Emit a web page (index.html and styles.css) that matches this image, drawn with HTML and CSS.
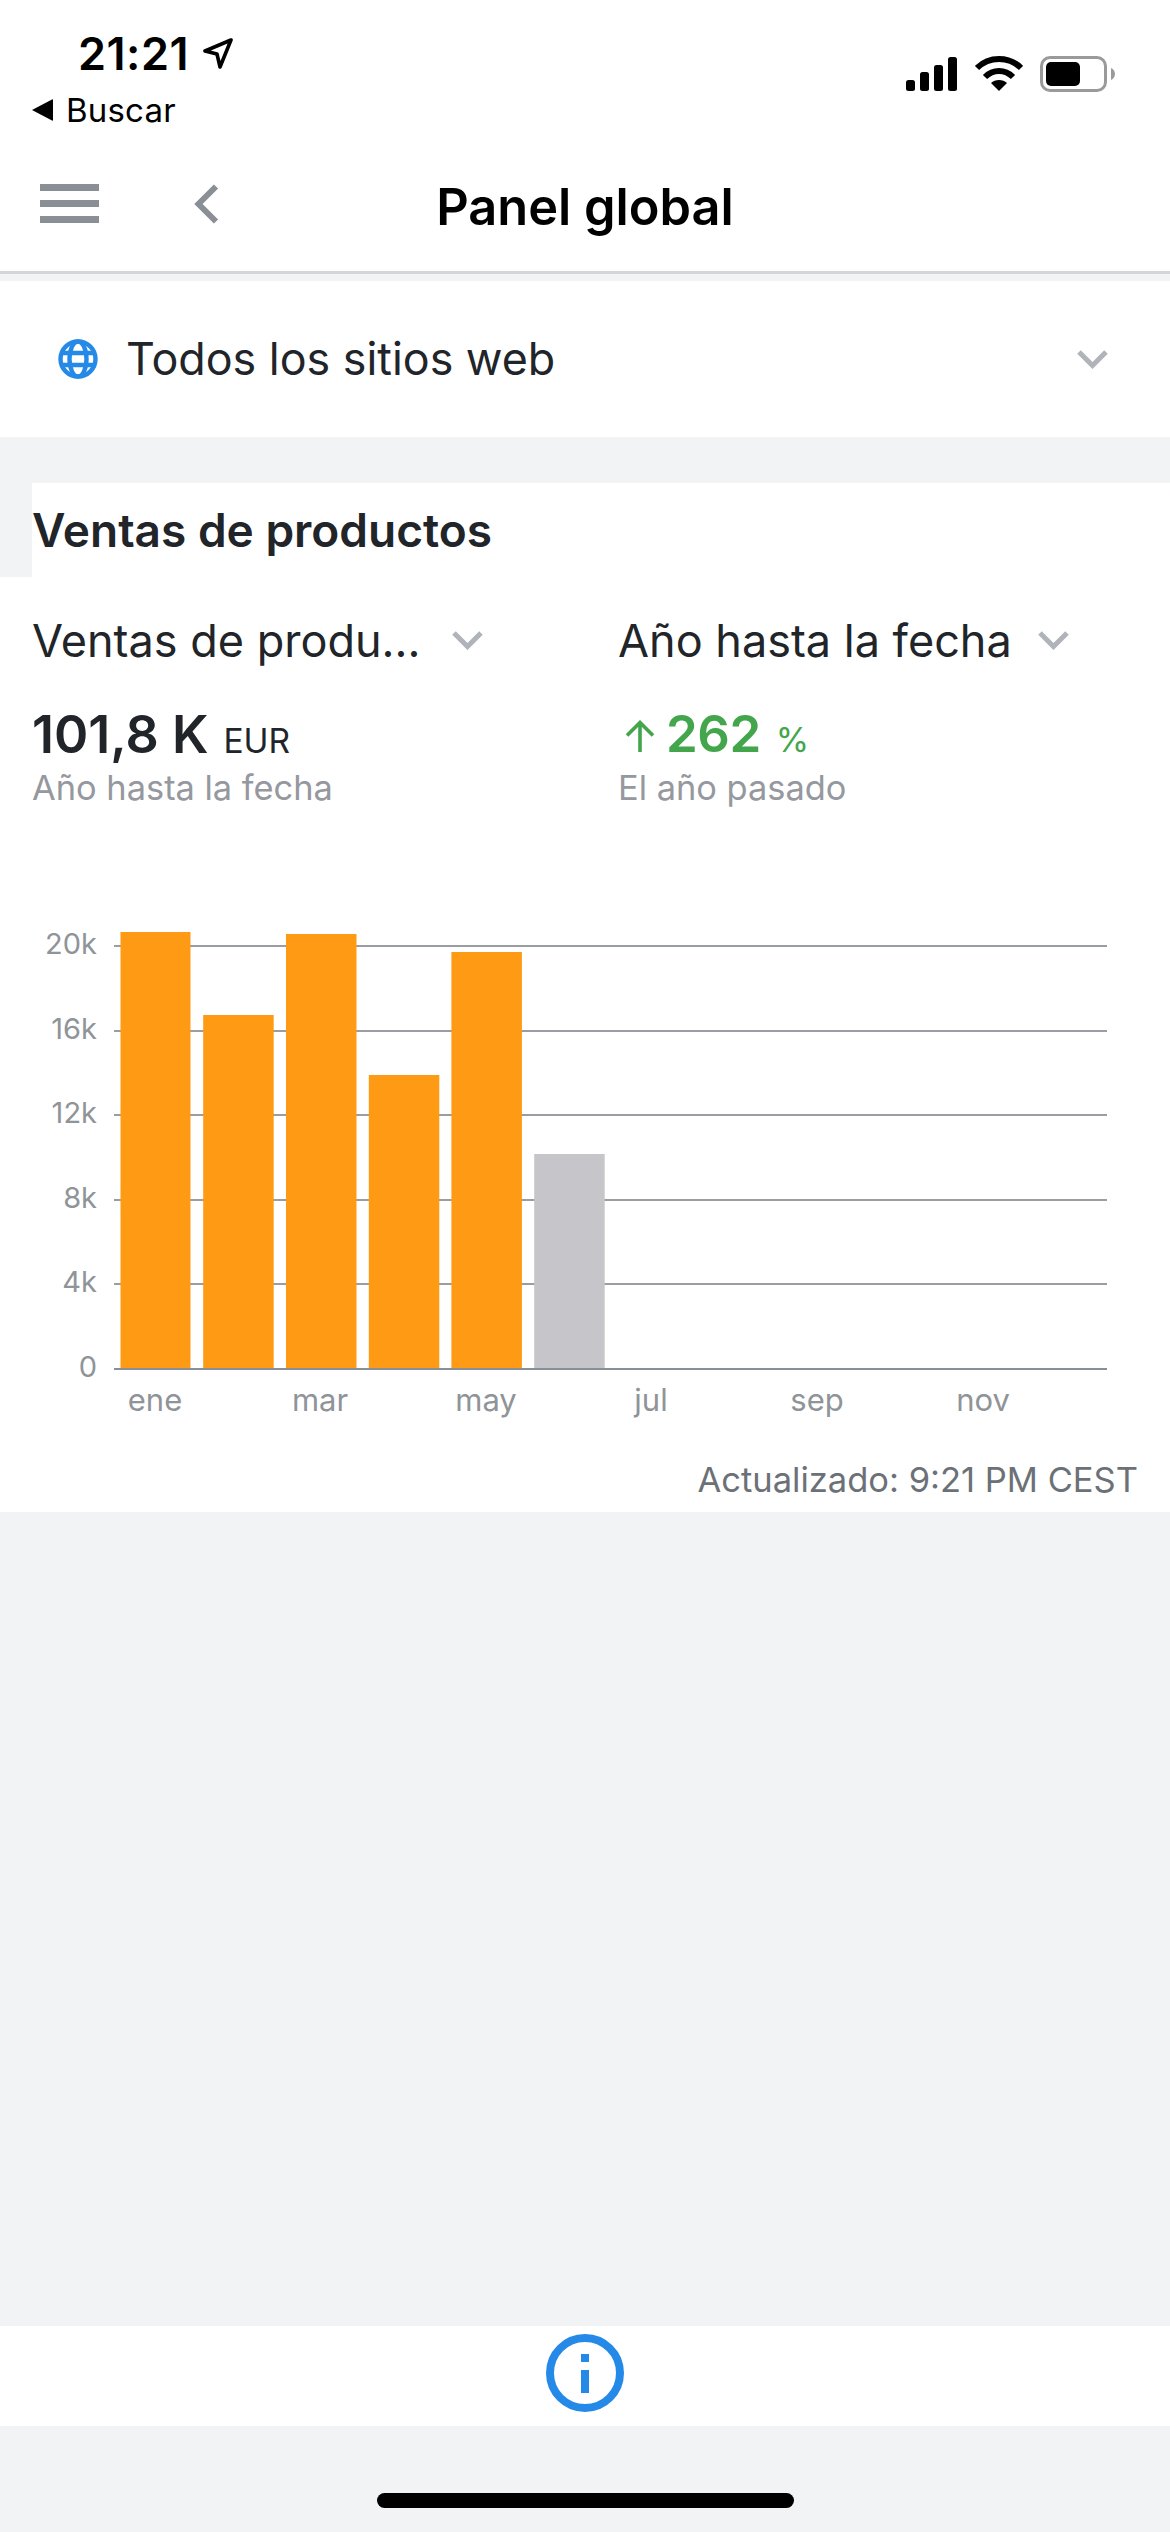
FILE: index.html
```html
<!DOCTYPE html>
<html lang="es">
<head>
<meta charset="utf-8">
<title>Panel global</title>
<link rel="stylesheet" href="styles.css">
</head>
<body>
<div class="phone">
  <header class="top">
    <div class="status">
      <div class="status-left">
        <div class="time-row">
          <span class="time">21:21</span>
          <svg class="loc" viewBox="0 0 32 32" width="32" height="32"><path d="M29 3 L3 14 L15 17 L18 30 Z" fill="none" stroke="#000" stroke-width="3.6" stroke-linejoin="round"/></svg>
        </div>
        <div class="back-row">
          <svg class="tri" viewBox="0 0 21 22" width="21" height="22"><path d="M0 11 L20 0.5 Q21 0 21 1 V21 Q21 22 20 21.5 Z" fill="#000"/></svg>
          <span class="buscar">Buscar</span>
        </div>
      </div>
      <div class="status-right">
        <svg class="signal" viewBox="0 0 52 34" width="52" height="34"><rect x="0" y="23" width="9" height="11" rx="2.5"/><rect x="14" y="15" width="9" height="19" rx="2.5"/><rect x="28" y="8" width="9" height="26" rx="2.5"/><rect x="42" y="0" width="9" height="34" rx="2.5"/></svg>
        <svg class="wifi" viewBox="0 0 48 36" width="48" height="36"><path d="M2 13 C14 1 34 1 46 13" fill="none" stroke="#000" stroke-width="6"/><path d="M10 22 C18 14 30 14 38 22" fill="none" stroke="#000" stroke-width="6"/><path d="M16 28 C20 24 28 24 32 28 L24 36 Z" fill="#000"/></svg>
        <div class="battery"><div class="battery-fill"></div></div>
        <svg class="battery-cap" viewBox="0 0 4 12" width="4" height="12"><path d="M0 0 C2.500 1 4 3.500 4 6 C4 8.500 2.500 11 0 12 Z" fill="#9a9a9a"/></svg>
      </div>
    </div>
    <div class="navbar">
      <div class="burger"><span></span><span></span><span></span></div>
      <svg class="nav-back" viewBox="0 0 26 40" width="26" height="40"><path d="M23 2.500 L5.500 20 L23 37.500" fill="none" stroke="#8a8f96" stroke-width="6"/></svg>
      <h1 class="nav-title">Panel global</h1>
    </div>
  </header>

  <section class="site-picker">
    <svg class="globe" viewBox="0 0 40 40" width="40" height="40">
      <g fill="none" stroke="#2589e8" stroke-width="4.400">
        <circle cx="20" cy="20" r="17.500"/>
        <ellipse cx="20" cy="20" rx="8.500" ry="17.500"/>
        <path d="M4 14 H36 M4 26 H36"/>
      </g>
    </svg>
    <span class="site-name">Todos los sitios web</span>
    <svg class="chev" viewBox="0 0 31 20" width="31" height="20"><path d="M2 3 L15.500 16.500 L29 3" fill="none" stroke="#b0b3b9" stroke-width="5"/></svg>
  </section>

  <section class="card">
    <div class="card-gutter">
      <h2 class="card-title">Ventas de productos</h2>
    </div>
    <div class="metrics">
      <div class="metric metric-a">
        <div class="metric-select">
          <span class="select-label">Ventas de produ...</span>
          <svg class="chev" viewBox="0 0 31 20" width="31" height="20"><path d="M2 3 L15.500 16.500 L29 3" fill="none" stroke="#b0b3b9" stroke-width="5"/></svg>
        </div>
        <div class="value-row"><span class="value">101,8 K</span><span class="unit">EUR</span></div>
        <div class="caption">Año hasta la fecha</div>
      </div>
      <div class="metric metric-b">
        <div class="metric-select">
          <span class="select-label">Año hasta la fecha</span>
          <svg class="chev" viewBox="0 0 31 20" width="31" height="20"><path d="M2 3 L15.500 16.500 L29 3" fill="none" stroke="#b0b3b9" stroke-width="5"/></svg>
        </div>
        <div class="value-row green">
          <svg class="arrow" viewBox="0 0 30 32" width="30" height="32"><path d="M15 32 V3 M2 15.500 L15 2.500 L28 15.500" fill="none" stroke="#43a64c" stroke-width="3.6"/></svg>
          <span class="value value-up">262</span><span class="pct">%</span>
        </div>
        <div class="caption">El año pasado</div>
      </div>
    </div>
    <svg class="chart" viewBox="0 900 1170 525" width="1170" height="525">
      <g class="grid">
        <line x1="114" x2="1107" y1="946" y2="946"/>
        <line x1="114" x2="1107" y1="1031" y2="1031"/>
        <line x1="114" x2="1107" y1="1115" y2="1115"/>
        <line x1="114" x2="1107" y1="1200" y2="1200"/>
        <line x1="114" x2="1107" y1="1284" y2="1284"/>
        <line class="axis" x1="114" x2="1107" y1="1369" y2="1369"/>
      </g>
      <g class="bars">
        <rect x="120.500" y="932" width="70" height="436"/>
        <rect x="203.200" y="1015" width="70.500" height="353"/>
        <rect x="286" y="934" width="70.500" height="434"/>
        <rect x="368.800" y="1075" width="70.500" height="293"/>
        <rect x="451.400" y="952" width="70.500" height="416"/>
        <rect class="bar-now" x="534.200" y="1154" width="70.500" height="214"/>
      </g>
      <g class="y-labels">
        <text x="97" y="954">20k</text>
        <text x="97" y="1039">16k</text>
        <text x="97" y="1123">12k</text>
        <text x="97" y="1208">8k</text>
        <text x="97" y="1292">4k</text>
        <text x="97" y="1377">0</text>
      </g>
      <g class="x-labels">
        <text x="155" y="1411">ene</text>
        <text x="320" y="1411">mar</text>
        <text x="486" y="1411">may</text>
        <text x="651" y="1411">jul</text>
        <text x="817" y="1411">sep</text>
        <text x="983" y="1411">nov</text>
      </g>
    </svg>
    <div class="updated">Actualizado: 9:21 PM CEST</div>
  </section>

  <div class="spacer"></div>

  <footer class="info-bar">
    <svg class="info" viewBox="0 0 78 78" width="78" height="78">
      <circle cx="39" cy="39" r="35" fill="none" stroke="#2589e8" stroke-width="8"/>
      <rect x="35" y="20" width="8" height="8" fill="#2589e8"/>
      <rect x="35" y="36" width="8" height="23" fill="#2589e8"/>
    </svg>
  </footer>
  <div class="home-area"><div class="home-bar"></div></div>
</div>
</body>
</html>
```

FILE: styles.css
```css
* { box-sizing: border-box; margin: 0; padding: 0; }
html, body { background: #f2f3f5; }
body { font-family: Inter, "Liberation Sans", sans-serif; color: #212529; }
.phone { width: 1170px; height: 2532px; display: flex; flex-direction: column; overflow: hidden; }

.top { height: 274px; background: #fff; border-bottom: 3px solid #d4d5d8; display: flex; flex-direction: column; }
.status { height: 136px; display: flex; justify-content: space-between; }
.status-left { padding: 28px 0 0 32px; }
.time-row { display: flex; align-items: center; padding-left: 46px; gap: 13px; height: 50px; }
.time { font-size: 45px; font-weight: 600; color: #000; letter-spacing: 0.5px; }
.back-row { display: flex; align-items: center; gap: 13px; height: 34px; margin-top: 15px; }
.buscar { font-size: 33px; font-weight: 400; color: #000; letter-spacing: 0.2px; }
.status-right { display: flex; align-items: flex-start; padding: 55px 55px 0 0; }
.signal { margin: 2px 17px 0 0; }
.wifi { margin-right: 17px; }
.battery { width: 67px; height: 36px; border: 3px solid #9a9a9a; border-radius: 10px; padding: 3px; margin-top: 1px; }
.battery-fill { width: 34px; height: 100%; background: #000; border-radius: 5px; }
.battery-cap { margin: 13px 0 0 4px; }

.navbar { position: relative; height: 135px; display: flex; align-items: center; padding-left: 40px; }
.burger { width: 59px; height: 39px; display: flex; flex-direction: column; justify-content: space-between; margin-right: 94px; }
.burger span { display: block; height: 7px; background: #8a8f96; }
.nav-title { position: absolute; left: 0; right: 0; top: 41px; text-align: center; font-size: 50.5px; font-weight: 600; color: #000; line-height: 60px; }

.site-picker { margin-top: 7px; height: 156px; background: #fff; display: flex; align-items: center; padding: 0 62px 0 58px; }
.site-name { font-size: 44.800px; margin-left: 28px; flex: 1; }
.chev { display: block; }

.card { margin-top: 46px; background: #fff; height: 1029px; }
.card-gutter { height: 94px; padding-left: 32px; box-shadow: inset 32px 0 0 #f2f3f5; display: flex; align-items: center; }
.card-title { font-size: 46px; font-weight: 600; line-height: 60px; }
.metrics { height: 323px; display: flex; padding: 33px 0 0 32px; }
.metric { flex: none; width: 586px; }
.metric-select { display: flex; align-items: center; height: 60px; }
.select-label { font-size: 45px; width: 420px; white-space: nowrap; }
.value-row { display: flex; align-items: baseline; height: 70px; margin-top: 33px; }
.value { font-size: 52px; font-weight: 600; }
.value-up { font-size: 51px; letter-spacing: -0.5px; }
.unit { font-size: 33.500px; margin-left: 15px; }
.green { color: #43a64c; }
.arrow { margin: 0 11px 0 7px; }
.pct { font-size: 34px; margin-left: 15px; }
.caption { font-size: 34.400px; color: #95989e; line-height: 40px; margin-top: -5px; }

.chart { display: block; }
.grid line { stroke: #9a9da2; stroke-width: 2; }
.grid .axis { stroke: #8a8f96; }
.bars rect { fill: #ff9a14; }
.bars .bar-now { fill: #c6c6ca; }
.y-labels text { font-family: Inter, sans-serif; font-size: 29px; fill: #8f9499; text-anchor: end; }
.x-labels text { font-family: Inter, sans-serif; font-size: 31px; fill: #8f9499; text-anchor: middle; }
.updated { text-align: right; padding-right: 32px; font-size: 34.500px; color: #6c7177; line-height: 40px; margin-top: 35px; }

.spacer { flex: 1; }
.info-bar { height: 100px; background: #fff; display: flex; justify-content: center; align-items: center; padding-bottom: 7px; }
.home-area { height: 106px; display: flex; justify-content: center; padding-top: 67px; }
.home-bar { width: 417px; height: 15px; background: #000; border-radius: 8px; }
```
